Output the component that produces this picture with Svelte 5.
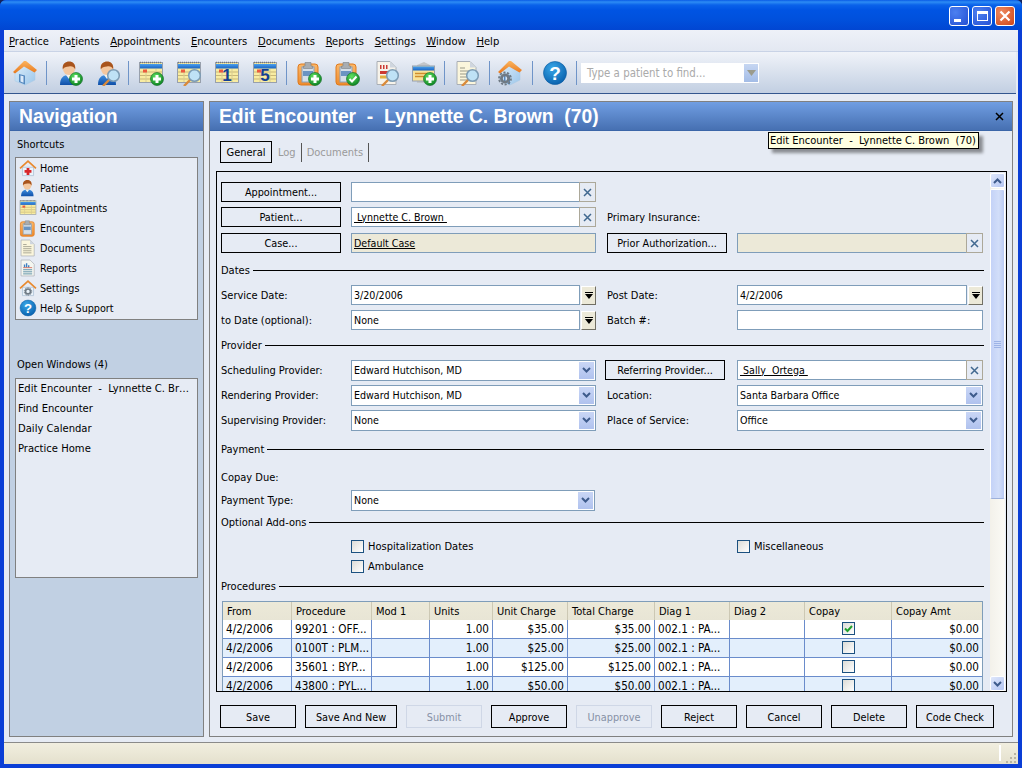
<script>
  const menu = [
    ['', 'P', 'ractice'],
    ['Pa', 't', 'ients'],
    ['', 'A', 'ppointments'],
    ['', 'E', 'ncounters'],
    ['', 'D', 'ocuments'],
    ['', 'R', 'eports'],
    ['', 'S', 'ettings'],
    ['', 'W', 'indow'],
    ['', 'H', 'elp']
  ];

  // ml = distance to the previous item, the toolbar groups are not evenly spaced
  const tools = [
    { ic: ['house'], ml: 0 },
    { sep: true, ml: 2 },
    { ic: ['person', 'plus'], ml: 4 },
    { ic: ['person', 'lens'], ml: 0 },
    { sep: true, ml: 1 },
    { ic: ['cal', 'plus'], ml: 3 },
    { ic: ['cal', 'lens'], ml: 0 },
    { ic: ['cal', 'one'], ml: 0 },
    { ic: ['cal', 'five'], ml: 0 },
    { sep: true, ml: 2 },
    { ic: ['clip', 'plus'], ml: 3 },
    { ic: ['clip', 'check'], ml: 0 },
    { ic: ['docred', 'lens'], ml: 2 },
    { ic: ['card', 'plus'], ml: -1 },
    { sep: true, ml: 1 },
    { ic: ['doc', 'lens'], ml: 3 },
    { sep: true, ml: 3 },
    { ic: ['house', 'gear'], ml: 1 },
    { sep: true, ml: 3 },
    { ic: ['help'], ml: 3 },
    { sep: true, ml: 2 }
  ];

  const shortcuts = [
    ['Home', ['homesmall', 'cross']],
    ['Patients', ['person']],
    ['Appointments', ['cal']],
    ['Encounters', ['clip']],
    ['Documents', ['doc']],
    ['Reports', ['docchart']],
    ['Settings', ['homesmall', 'smallgear']],
    ['Help & Support', ['help']]
  ];

  const openWindows = ['Edit Encounter  -  Lynnette C. Brown  (70)', 'Find Encounter', 'Daily Calendar', 'Practice Home'];

  const columns = [
    ['From', 69], ['Procedure', 80], ['Mod 1', 58], ['Units', 63], ['Unit Charge', 75],
    ['Total Charge', 87], ['Diag 1', 75], ['Diag 2', 75], ['Copay', 87], ['Copay Amt', 91]
  ];

  const procedures = [
    ['99201 : OFF...', '$35.00', true],
    ['0100T : PLM...', '$25.00', false],
    ['35601 : BYP...', '$125.00', false],
    ['43800 : PYL...', '$50.00', false]
  ];

  const actions = [
    ['Save', 76], ['Save And New', 92], ['Submit', 76, true], ['Approve', 76], ['Unapprove', 76, true],
    ['Reject', 76], ['Cancel', 76], ['Delete', 76], ['Code Check', 78]
  ];
</script>

{#snippet ico(parts, cls)}
  <svg class={cls} viewBox="0 0 26 26">
    {#each parts as p}
      <use href={'#' + p} />
    {/each}
  </svg>
{/snippet}

{#snippet clear()}
  <span class="clear">
    <svg viewBox="0 0 9 9" width="9" height="9"><path d="M1 1l7 7M8 1l-7 7" stroke="#41688f" stroke-width="1.5" /></svg>
  </span>
{/snippet}

{#snippet combo(text, cls)}
  <div class={'field combo ' + (cls || '')}>
    <span class="val">{text}</span>
    <span class="chev">
      <svg viewBox="0 0 9 7" width="9" height="7"><path d="M1 1l3.5 3.5L8 1" fill="none" stroke="#3e5b8c" stroke-width="2" /></svg>
    </span>
  </div>
{/snippet}

{#snippet datefield(text)}
  <div class="datefield">
    <div class="field grow"><span class="val">{text}</span></div>
    <span class="ddbtn">
      <svg viewBox="0 0 8 7" width="8" height="7"><path d="M0 0h8v1H0zM0 2h8L4 7z" fill="#000" /></svg>
    </span>
  </div>
{/snippet}

{#snippet section(title)}
  <div class="section"><span>{title}</span><i></i></div>
{/snippet}

<svg class="defs" width="0" height="0" aria-hidden="true">
  <defs>
    <linearGradient id="gRoof" x1="0" y1="0" x2="0" y2="1"><stop offset="0" stop-color="#fbb45e" /><stop offset="1" stop-color="#e8771c" /></linearGradient>
    <linearGradient id="gWall" x1="0" y1="0" x2="1" y2="1"><stop offset="0" stop-color="#dceefb" /><stop offset="1" stop-color="#9cc6ea" /></linearGradient>
    <linearGradient id="gBody" x1="0" y1="0" x2="0" y2="1"><stop offset="0" stop-color="#3f8fe0" /><stop offset="1" stop-color="#0f4fa8" /></linearGradient>
    <radialGradient id="gGreen" cx=".4" cy=".3" r=".8"><stop offset="0" stop-color="#5fe05f" /><stop offset="1" stop-color="#067a1e" /></radialGradient>
    <radialGradient id="gHelp" cx=".4" cy=".3" r=".8"><stop offset="0" stop-color="#39a7e8" /><stop offset="1" stop-color="#045aa8" /></radialGradient>
    <linearGradient id="gOrange" x1="0" y1="0" x2="0" y2="1"><stop offset="0" stop-color="#fbb86a" /><stop offset="1" stop-color="#ee8a2c" /></linearGradient>
    <linearGradient id="gBand" x1="0" y1="0" x2="0" y2="1"><stop offset="0" stop-color="#4aa0ee" /><stop offset="1" stop-color="#1c64c0" /></linearGradient>

    <g id="house">
      <path d="M3 11L13 4l10 7v9l-10 5-10-4z" fill="url(#gWall)" stroke="#a9c8e4" stroke-width=".5" />
      <path d="M7 14l6 1.500v9l-6-2.500z" fill="#5589bf" />
      <path d="M8.500 15.500l3 .8v6.400l-3-1.200z" fill="#dbeafa" />
      <path d="M1 12L12 1h2l11 9-2.500 2.500L12 6.500l-9 7z" fill="url(#gRoof)" />
    </g>
    <g id="homesmall">
      <path d="M5 12h16v12H5z" fill="#eaf3fb" stroke="#a7bdd0" />
      <path d="M1.500 13.500L13 3l11.500 10.500" fill="none" stroke="#e8892e" stroke-width="2.400" />
    </g>
    <path id="cross" d="M11 13h4v3h3v4h-3v3h-4v-3H8v-4h3z" fill="#d8262a" />
    <g id="smallgear">
      <circle cx="13" cy="18" r="3.600" fill="none" stroke="#6f7a84" stroke-width="2.400" />
      <circle cx="13" cy="18" r="5.400" fill="none" stroke="#6f7a84" stroke-width="1.400" stroke-dasharray="2 1.400" />
    </g>
    <g id="person">
      <path d="M3 25c0-7 3-10 9-10s9 3 9 10z" fill="url(#gBody)" />
      <path d="M9 15h6l-3 4z" fill="#f6f3ea" />
      <circle cx="12" cy="9" r="6" fill="#f4c79e" />
      <path d="M5.800 9.500C4.800 3.500 9 1.500 12 1.500c3.800 0 7 2.500 6.200 8-1.200-3-3.500-3.400-6.200-3-3 .4-5 .4-6.200 3z" fill="#a9541c" />
    </g>
    <g id="plus">
      <circle cx="19" cy="19" r="6.500" fill="url(#gGreen)" stroke="#0a6a20" stroke-width=".6" />
      <path d="M17.500 15h3v2.500H23v3h-2.500V23h-3v-2.500H15v-3h2.500z" fill="#fff" />
    </g>
    <g id="check">
      <circle cx="19" cy="19" r="6.500" fill="url(#gGreen)" stroke="#0a6a20" stroke-width=".6" />
      <path d="M15.500 19l2.500 2.500 4.500-5" fill="none" stroke="#fff" stroke-width="2" />
    </g>
    <g id="lens">
      <path d="M15 19l-7 7" stroke="#d98a3a" stroke-width="2.400" />
      <circle cx="18.500" cy="15.500" r="5.800" fill="#bfe2f6" stroke="#7d9cb4" stroke-width="1.500" />
    </g>
    <g id="cal">
      <rect x="1.500" y="2.500" width="23" height="20" fill="#f8eca2" stroke="#98a0ac" />
      <path d="M2 2.500h22" stroke="#777" stroke-width="1.600" stroke-dasharray="1 1" />
      <rect x="2" y="4" width="22" height="4.500" fill="url(#gBand)" />
      <path d="M2 12h22M2 15.500h22M2 19h22" stroke="#c9b777" />
      <path d="M8 9v13M18 9v13" stroke="#d8cc92" />
      <rect x="5" y="9.500" width="4" height="3" fill="#ec5a3e" />
    </g>
    <text id="one" x="13" y="21" text-anchor="middle" font-family="Liberation Sans" font-weight="700" font-size="17" fill="#123f94">1</text>
    <text id="five" x="13" y="21" text-anchor="middle" font-family="Liberation Sans" font-weight="700" font-size="17" fill="#123f94">5</text>
    <g id="clip">
      <rect x="2" y="4" width="20" height="21" rx="3" fill="url(#gOrange)" stroke="#e07a1c" />
      <rect x="6" y="7" width="12" height="15" fill="#d5dfe9" stroke="#8ba0b6" />
      <rect x="7" y="11" width="10" height="5" fill="#6a94c2" />
      <path d="M9 6V2.500h6V6h1.500v2.500h-9V6z" fill="#a9adb1" stroke="#7b8085" stroke-width=".6" />
    </g>
    <g id="doc">
      <path d="M3 1.500h13l6 6v17H3z" fill="#fbf6dc" stroke="#a9aeb5" />
      <path d="M16 1.500v6h6z" fill="#cfd6df" />
      <path d="M6 8h5M6 11h12M6 14h12M6 17h12M6 20h12" stroke="#9c9a88" stroke-width="1.200" />
    </g>
    <g id="docred">
      <path d="M3 1.500h13l6 6v17H3z" fill="#f7f3ea" stroke="#a9aeb5" />
      <path d="M16 1.500v6h6z" fill="#cfd6df" />
      <path d="M6 5h1.500v4H6zM9 5h1.500v4H9zM12 5h1.500v4H12z" fill="#cc3a32" />
      <rect x="6" y="11" width="12" height="3" fill="#cc3a32" />
      <rect x="6" y="15.500" width="10" height="3" fill="#e0b040" />
    </g>
    <g id="docchart">
      <path d="M3 1.500h13l6 6v17H3z" fill="#f4f6f0" stroke="#a9aeb5" />
      <path d="M7 12v-4h2v4zM10 12v-6h2v6zM13 12v-3h2v3z" fill="#3f7fc0" />
      <path d="M6 12.500h13" stroke="#cc4a32" />
      <path d="M6 15.500h13M6 18.500h13M6 21.500h13" stroke="#5f93a8" stroke-width="1.400" />
    </g>
    <g id="card">
      <path d="M6 5l7-3 6 3v18H6z" fill="#c2c6ca" />
      <rect x="1.500" y="6" width="22" height="15" fill="#f9e39a" stroke="#98a0ac" />
      <rect x="2" y="6.500" width="21" height="4" fill="url(#gBand)" />
      <path d="M4 13.500h13M4 16.500h11" stroke="#d08d2c" stroke-width="1.400" />
    </g>
    <g id="gear">
      <circle cx="8" cy="18.500" r="3.600" fill="none" stroke="#6f7a84" stroke-width="2.800" />
      <circle cx="8" cy="18.500" r="6" fill="none" stroke="#6f7a84" stroke-width="1.800" stroke-dasharray="2.200 1.500" />
    </g>
    <g id="help">
      <circle cx="13" cy="13" r="11.500" fill="url(#gHelp)" stroke="#0a5aa0" stroke-width=".6" />
      <text x="13" y="20" text-anchor="middle" font-family="Liberation Sans" font-weight="700" font-size="19" fill="#fff">?</text>
    </g>
  </defs>
</svg>

<div class="window">
  <header class="titlebar">
    <div class="winbtns">
      <span class="winbtn"><i class="min"></i></span>
      <span class="winbtn"><i class="max"></i></span>
      <span class="winbtn close">
        <svg viewBox="0 0 12 12" width="12" height="12"><path d="M1.500 1.500l9 9M10.500 1.500l-9 9" stroke="#fff" stroke-width="2.200" /></svg>
      </span>
    </div>
  </header>

  <div class="client">
    <nav class="menubar">
      {#each menu as [a, u, b]}
        <span class="menuitem">{a}<u>{u}</u>{b}</span>
      {/each}
    </nav>

    <div class="toolbar">
      {#each tools as t}
        {#if t.sep}
          <span class="tsep" style="margin-left:{t.ml}px"></span>
        {:else}
          <span class="tool" style="margin-left:{t.ml}px">{@render ico(t.ic, 'tic')}</span>
        {/if}
      {/each}
      <div class="finder">
        <span>Type a patient to find...</span>
        <span class="finderbtn">
          <svg viewBox="0 0 9 6" width="9" height="6"><path d="M0 0h9L4.500 6z" fill="#9b9b8c" /></svg>
        </span>
      </div>
    </div>

    <main class="main">
      <aside class="panel navpanel">
        <h2>Navigation</h2>
        <div class="navbody">
          <div class="navlabel first">Shortcuts</div>
          <ul class="navlist">
            {#each shortcuts as [name, parts]}
              <li>{@render ico(parts, 'nic')}<span>{name}</span></li>
            {/each}
          </ul>
          <div class="navlabel second">Open Windows (4)</div>
          <ul class="navlist windows">
            {#each openWindows as w}
              <li><span class="cut">{w}</span></li>
            {/each}
          </ul>
        </div>
      </aside>

      <section class="panel editpanel">
        <h2>
          Edit Encounter&nbsp; -&nbsp; Lynnette C. Brown&nbsp; (70)
          <svg class="panelx" viewBox="0 0 9 9" width="9" height="9"><path d="M1 1l7 7M8 1L1 8" stroke="#000" stroke-width="1.500" /></svg>
        </h2>
        <div class="tip">Edit Encounter&nbsp; -&nbsp; Lynnette C. Brown&nbsp; (70)</div>

        <div class="tabs">
          <span class="tab active">General</span>
          <span class="tab">Log</span>
          <span class="tab">Documents</span>
        </div>

        <div class="box">
          <div class="content">
            <div class="form">
              <button class="btn c1">Appointment...</button>
              <div class="field split c2"><span class="val"></span>{@render clear()}</div>

              <button class="btn c1">Patient...</button>
              <div class="field split c2"><span class="val"><u>&nbsp;Lynnette C. Brown&nbsp;</u></span>{@render clear()}</div>
              <label class="c4">Primary Insurance:</label>

              <button class="btn c1">Case...</button>
              <div class="field locked c2"><span class="val"><u>Default Case</u></span></div>
              <button class="btn c4 wide">Prior Authorization...</button>
              <div class="field locked split c5"><span class="val"></span>{@render clear()}</div>

              {@render section('Dates')}

              <label class="c1">Service Date:</label>
              <div class="c2">{@render datefield('3/20/2006')}</div>
              <label class="c4">Post Date:</label>
              <div class="c5">{@render datefield('4/2/2006')}</div>

              <label class="c1">to Date (optional):</label>
              <div class="c2">{@render datefield('None')}</div>
              <label class="c4">Batch #:</label>
              <div class="field c5"></div>

              {@render section('Provider')}

              <label class="c1">Scheduling Provider:</label>
              <div class="c2">{@render combo('Edward Hutchison, MD')}</div>
              <button class="btn c4 wide shifted">Referring Provider...</button>
              <div class="field split c5"><span class="val"><u>&nbsp;Sally&nbsp; Ortega&nbsp;</u></span>{@render clear()}</div>

              <label class="c1">Rendering Provider:</label>
              <div class="c2">{@render combo('Edward Hutchison, MD')}</div>
              <label class="c4">Location:</label>
              <div class="c5">{@render combo('Santa Barbara Office')}</div>

              <label class="c1">Supervising Provider:</label>
              <div class="c2">{@render combo('None')}</div>
              <label class="c4">Place of Service:</label>
              <div class="c5">{@render combo('Office')}</div>

              {@render section('Payment')}

              <label class="c1">Copay Due:</label>

              <label class="c1">Payment Type:</label>
              <div class="c2">{@render combo('None', 'short')}</div>

              {@render section('Optional Add-ons')}

              <div class="checkrow c2"><span class="cb"></span><span class="cbtext">Hospitalization Dates</span></div>
              <div class="checkrow c5"><span class="cb"></span><span class="cbtext">Miscellaneous</span></div>
              <div class="checkrow c2"><span class="cb"></span><span class="cbtext">Ambulance</span></div>

              {@render section('Procedures')}

              <div class="gridwrap">
                <table>
                  <colgroup>
                    {#each columns as [, w]}
                      <col style="width:{w}px" />
                    {/each}
                  </colgroup>
                  <thead>
                    <tr>
                      {#each columns as [name]}
                        <th>{name}</th>
                      {/each}
                    </tr>
                  </thead>
                  <tbody>
                    {#each procedures as [proc, amt, copay], i}
                      <tr class:alt={i % 2 === 1}>
                        <td>4/2/2006</td>
                        <td>{proc}</td>
                        <td></td>
                        <td class="num">1.00</td>
                        <td class="num">{amt}</td>
                        <td class="num">{amt}</td>
                        <td>002.1 : PA...</td>
                        <td></td>
                        <td class="mid">
                          <span class="cb">
                            {#if copay}
                              <svg viewBox="0 0 11 11" width="11" height="11"><path d="M2 5.500l2.500 2.500L9 3" fill="none" stroke="#22a22e" stroke-width="2" /></svg>
                            {/if}
                          </span>
                        </td>
                        <td class="num">$0.00</td>
                      </tr>
                    {/each}
                  </tbody>
                </table>
              </div>
            </div>
          </div>

          <div class="scrollbar">
            <span class="sbtn">
              <svg viewBox="0 0 9 6" width="9" height="6"><path d="M1 5l3.500-3.500L8 5" fill="none" stroke="#3e5b8c" stroke-width="2" /></svg>
            </span>
            <span class="thumb"><i></i></span>
            <span class="track"></span>
            <span class="sbtn">
              <svg viewBox="0 0 9 6" width="9" height="6"><path d="M1 1l3.500 3.500L8 1" fill="none" stroke="#3e5b8c" stroke-width="2" /></svg>
            </span>
          </div>
        </div>

        <div class="actions">
          {#each actions as [name, w, off]}
            <button class="btn" class:off style="width:{w}px">{name}</button>
          {/each}
        </div>
      </section>
    </main>

    <footer class="status">
      <span class="statsep"></span>
      <svg viewBox="0 0 12 12" width="12" height="12">
        <path d="M9 1h2v2H9zM5 5h2v2H5zM9 5h2v2H9zM1 9h2v2H1zM5 9h2v2H5zM9 9h2v2H9z" fill="#b8b4a2" />
      </svg>
    </footer>
  </div>
</div>

<style>
  :global(body) {
    margin: 0;
    background: #14245c;
  }

  .defs {
    position: absolute;
  }

  .window {
    width: 1022px;
    height: 768px;
    display: flex;
    flex-direction: column;
    border-radius: 6px 6px 0 0;
    overflow: hidden;
    background: #0a3ed6;
    font-family: "DejaVu Sans Condensed", "DejaVu Sans", sans-serif;
    font-stretch: condensed;
    font-size: 11px;
    color: #000;
  }

  .titlebar {
    height: 30px;
    flex: none;
    display: flex;
    justify-content: flex-end;
    background: linear-gradient(#0a5be6 0, #2d8cf4 2px, #0a62ea 5px, #0054e3 10px, #0050dc 20px, #0146d2 30px);
  }

  .winbtns {
    display: flex;
    gap: 3px;
    padding: 6px 7px 0 0;
  }

  .winbtn {
    width: 20px;
    height: 20px;
    box-sizing: border-box;
    border: 1px solid #fff;
    border-radius: 3px;
    background: radial-gradient(circle at 30% 30%, #4c80f0, #2450d4);
    display: flex;
    align-items: center;
    justify-content: center;
  }

  .winbtn.close {
    background: radial-gradient(circle at 30% 30%, #ee8a60, #cf4418);
  }

  .min {
    width: 7px;
    height: 3px;
    background: #fff;
    margin: 8px 4px 0 0;
  }

  .max {
    width: 11px;
    height: 10px;
    border: 1px solid #fff;
    border-top-width: 3px;
    box-sizing: border-box;
  }

  .client {
    flex: 1;
    margin: 0 4px 4px;
    display: flex;
    flex-direction: column;
    min-height: 0;
    background: #e6ebf4;
  }

  .menubar {
    height: 22px;
    flex: none;
    display: flex;
    align-items: center;
    gap: 10.75px;
    padding: 2px 0 0 5px;
    background: linear-gradient(#eef1f8, #e3e8f2);
    border-bottom: 1px solid #c9d3e6;
    box-sizing: border-box;
    font-size: 11.1px;
  }

  .toolbar {
    height: 41px;
    flex: none;
    display: flex;
    align-items: center;
    padding-left: 2px;
    margin-right: 2px;
    background: linear-gradient(#f0f3f9, #c2cfe2);
    border-bottom: 1px solid #33568f;
  }

  .tool {
    width: 38px;
    display: flex;
    justify-content: center;
  }

  .tic {
    width: 26px;
    height: 26px;
  }

  .tsep {
    width: 1px;
    height: 24px;
    background: #6f94c8;
  }

  .finder {
    width: 178px;
    height: 20px;
    margin-left: 4px;
    background: #fff;
    display: flex;
    align-items: center;
    justify-content: space-between;
    color: #aaa;
    padding-left: 6px;
    box-sizing: border-box;
    font-size: 11.4px;
  }

  .finderbtn {
    width: 14px;
    height: 18px;
    margin-right: 1px;
    background: linear-gradient(#c6d6f2, #a3bce6);
    display: flex;
    align-items: center;
    justify-content: center;
  }

  .main {
    flex: 1;
    min-height: 0;
    display: flex;
    gap: 5px;
    padding: 7px 5px 5px;
  }

  .panel {
    border: 1px solid #808080;
    display: flex;
    flex-direction: column;
    position: relative;
    min-width: 0;
  }

  .panel h2 {
    margin: 0;
    height: 29px;
    box-sizing: border-box;
    flex: none;
    background: linear-gradient(#709ee2, #4670b2);
    border-bottom: 1px solid #3b66a8;
    color: #fff;
    font-family: "Liberation Sans", sans-serif;
    font-stretch: normal;
    font-size: 19.3px;
    font-weight: 700;
    line-height: 30px;
    padding-left: 9px;
    white-space: nowrap;
    position: relative;
  }

  .navpanel {
    width: 193px;
    flex: none;
    background: #c1d0e3;
  }

  .editpanel {
    flex: 1;
    background: #e6ebf4;
  }

  .panelx {
    position: absolute;
    right: 8px;
    top: 10px;
  }

  .navbody {
    flex: 1;
    padding: 0 5px;
  }

  .navlabel {
    height: 26px;
    line-height: 28px;
    padding-left: 2px;
  }

  .navlabel.second {
    height: auto;
    line-height: 14px;
    margin: 38px 0 6px;
  }

  .navlist {
    list-style: none;
    margin: 0;
    padding: 0;
    background: #e6ebf4;
    border: 1px solid #808080;
    height: 161px;
    font-size: 10.7px;
  }

  .navlist.windows {
    height: 198px;
    font-size: 11.15px;
  }

  .navlist li {
    height: 20px;
    display: flex;
    align-items: center;
    gap: 3px;
    padding-left: 3px;
  }

  .navlist.windows li {
    padding-left: 2px;
    padding-bottom: 1px;
    box-sizing: border-box;
  }

  .cut {
    white-space: pre;
    overflow: hidden;
    text-overflow: ellipsis;
    width: 172px;
  }

  .nic {
    width: 18px;
    height: 18px;
  }

  .tip {
    position: absolute;
    left: 558px;
    top: 30px;
    width: 208px;
    height: 15px;
    line-height: 15px;
    border: 1px solid #000;
    background: #ffffe1;
    padding-left: 1px;
    white-space: nowrap;
    box-shadow: 4px 4px 3px rgba(0, 0, 0, 0.4);
    z-index: 2;
  }

  .tabs {
    display: flex;
    height: 22px;
    margin: 10px 0 8px 10px;
    flex: none;
  }

  .tab {
    display: flex;
    align-items: center;
    color: #9a9a9a;
    padding: 0 5px;
    border-right: 1px solid #555;
    margin: 2px 0 1px;
  }

  .tab.active {
    color: #000;
    border: 1px solid #000;
    margin: 0 1px 0 0;
    padding: 0 4px;
    width: 52px;
    box-sizing: border-box;
    justify-content: center;
  }

  .box {
    margin: 0 5px 0 6px;
    height: 521px;
    box-sizing: border-box;
    border: 1px solid #000;
    display: flex;
    flex: none;
  }

  .content {
    flex: 1;
    min-width: 0;
    overflow: hidden;
    padding: 10px 0 0 4px;
  }

  .form {
    display: grid;
    grid-template-columns: 130px 245px 11px 130px 246px;
    grid-template-rows: 25px 26px 30px 22px 25px 28px 22px 25px 25px 32px 25px 23px 25px 25px 20px 19px 22px auto;
  }

  .c1 {
    grid-column: 1;
  }

  .c2 {
    grid-column: 2;
  }

  .c4 {
    grid-column: 4;
  }

  .c5 {
    grid-column: 5;
  }

  label {
    line-height: 21px;
    height: 21px;
    white-space: nowrap;
  }

  .btn {
    font: inherit;
    font-size: 10.8px;
    color: inherit;
    background: transparent;
    border: 1px solid #000;
    padding: 1px 0 0;
    height: 20px;
    width: 120px;
  }

  .btn.wide {
    width: 120px;
  }

  .btn.shifted {
    margin-left: -2px;
  }

  .btn.off {
    border-color: #cfd7e6;
    color: #8791a6;
  }

  .field {
    height: 20px;
    border: 1px solid #7f9db9;
    background: #fff;
    box-sizing: border-box;
    display: flex;
    align-items: center;
    white-space: nowrap;
  }

  .field.locked {
    background: #ece9d8;
  }

  .val {
    flex: 1;
    padding-left: 2px;
    line-height: 16px;
    margin-top: -1px;
    font-size: 10.6px;
  }

  .split {
    padding-right: 0;
  }

  .clear {
    width: 17px;
    height: 20px;
    margin: -1px -1px -1px 0;
    box-sizing: border-box;
    border: 1px solid #aca899;
    background: #e6ebf4;
    display: flex;
    align-items: center;
    justify-content: center;
  }

  .combo {
    height: 21px;
  }

  .combo.short {
    width: 244px;
  }

  .chev {
    width: 15px;
    height: 17px;
    margin-right: 1px;
    background: linear-gradient(#c9d6f6, #b0c2ee);
    display: flex;
    align-items: center;
    justify-content: center;
  }

  .datefield {
    display: flex;
    align-items: flex-start;
    gap: 1px;
  }

  .grow {
    flex: 1;
    min-width: 0;
  }

  .ddbtn {
    width: 15px;
    height: 19px;
    margin-top: 1px;
    box-sizing: border-box;
    background: #ece9d8;
    border-right: 1px solid #716f64;
    border-bottom: 1px solid #716f64;
    border-top: 1px solid #fff;
    border-left: 1px solid #fff;
    display: flex;
    align-items: center;
    justify-content: center;
  }

  .section {
    grid-column: 1 / -1;
    display: flex;
    align-items: center;
    gap: 3px;
    height: 14px;
    margin-right: -1px;
  }

  .section i {
    flex: 1;
    height: 1px;
    background: #000;
  }

  .checkrow {
    display: flex;
    align-items: flex-start;
    gap: 4px;
  }

  .cbtext {
    line-height: 13px;
  }

  .cb {
    width: 13px;
    height: 13px;
    flex: none;
    box-sizing: border-box;
    border: 1px solid #1c5180;
    background: linear-gradient(135deg, #dcdcd7, #fff);
    display: inline-flex;
    vertical-align: top;
  }

  .gridwrap {
    grid-column: 1 / -1;
    margin-left: 1px;
    height: 90px;
    overflow: hidden;
    box-sizing: border-box;
    border: 1px solid #7f9db9;
    border-bottom: 0;
    width: 761px;
  }

  table {
    border-collapse: separate;
    border-spacing: 0;
    table-layout: fixed;
    width: 760px;
  }

  th {
    font-weight: 400;
    text-align: left;
    height: 18px;
    padding: 0 0 0 4px;
    background: linear-gradient(#ece9d8, #e8e5d5);
    box-shadow: inset -2px 0 0 -1px #ccc8b4;
  }

  td {
    height: 18px;
    padding: 0 3px;
    background: #fff;
    border-right: 1px solid #6a8ccb;
    border-bottom: 1px solid #6a8ccb;
    white-space: nowrap;
    overflow: hidden;
    font-size: 11.6px;
  }

  .alt td {
    background: #e3effc;
  }

  .num {
    text-align: right;
  }

  .mid {
    text-align: center;
  }

  .scrollbar {
    width: 15px;
    flex: none;
    margin: 1px 1px 0 0;
    display: flex;
    flex-direction: column;
    background: linear-gradient(90deg, #f3f1ea, #fbfaf6);
  }

  .sbtn {
    height: 15px;
    flex: none;
    box-sizing: border-box;
    border: 1px solid #fff;
    border-radius: 2px;
    background: linear-gradient(135deg, #dfe7fb, #b5c6f2);
    display: flex;
    align-items: center;
    justify-content: center;
  }

  .thumb {
    height: 310px;
    flex: none;
    margin-top: 1px;
    box-sizing: border-box;
    border: 1px solid #fff;
    border-bottom-color: #9db0dc;
    border-radius: 2px;
    background: linear-gradient(90deg, #c4d2f7, #d2def9 60%, #b9c9f2);
    display: flex;
    align-items: center;
    justify-content: center;
  }

  .thumb i {
    width: 7px;
    height: 7px;
    background: repeating-linear-gradient(#9db3e6 0 1px, transparent 1px 2px);
  }

  .track {
    flex: 1;
  }

  .actions {
    display: flex;
    gap: 9px;
    margin: 13px 0 0 10px;
    flex: none;
  }

  .actions .btn {
    height: 23px;
  }

  .status {
    height: 22px;
    flex: none;
    border-top: 1px solid #8a8a8a;
    background: linear-gradient(#f1eee0, #ece9d8 40%, #e4e0cd);
    display: flex;
    align-items: flex-end;
    justify-content: flex-end;
    gap: 4px;
    padding-right: 1px;
    box-sizing: border-box;
  }

  .statsep {
    width: 2px;
    height: 16px;
    margin-bottom: 3px;
    background: #fff;
  }
</style>
